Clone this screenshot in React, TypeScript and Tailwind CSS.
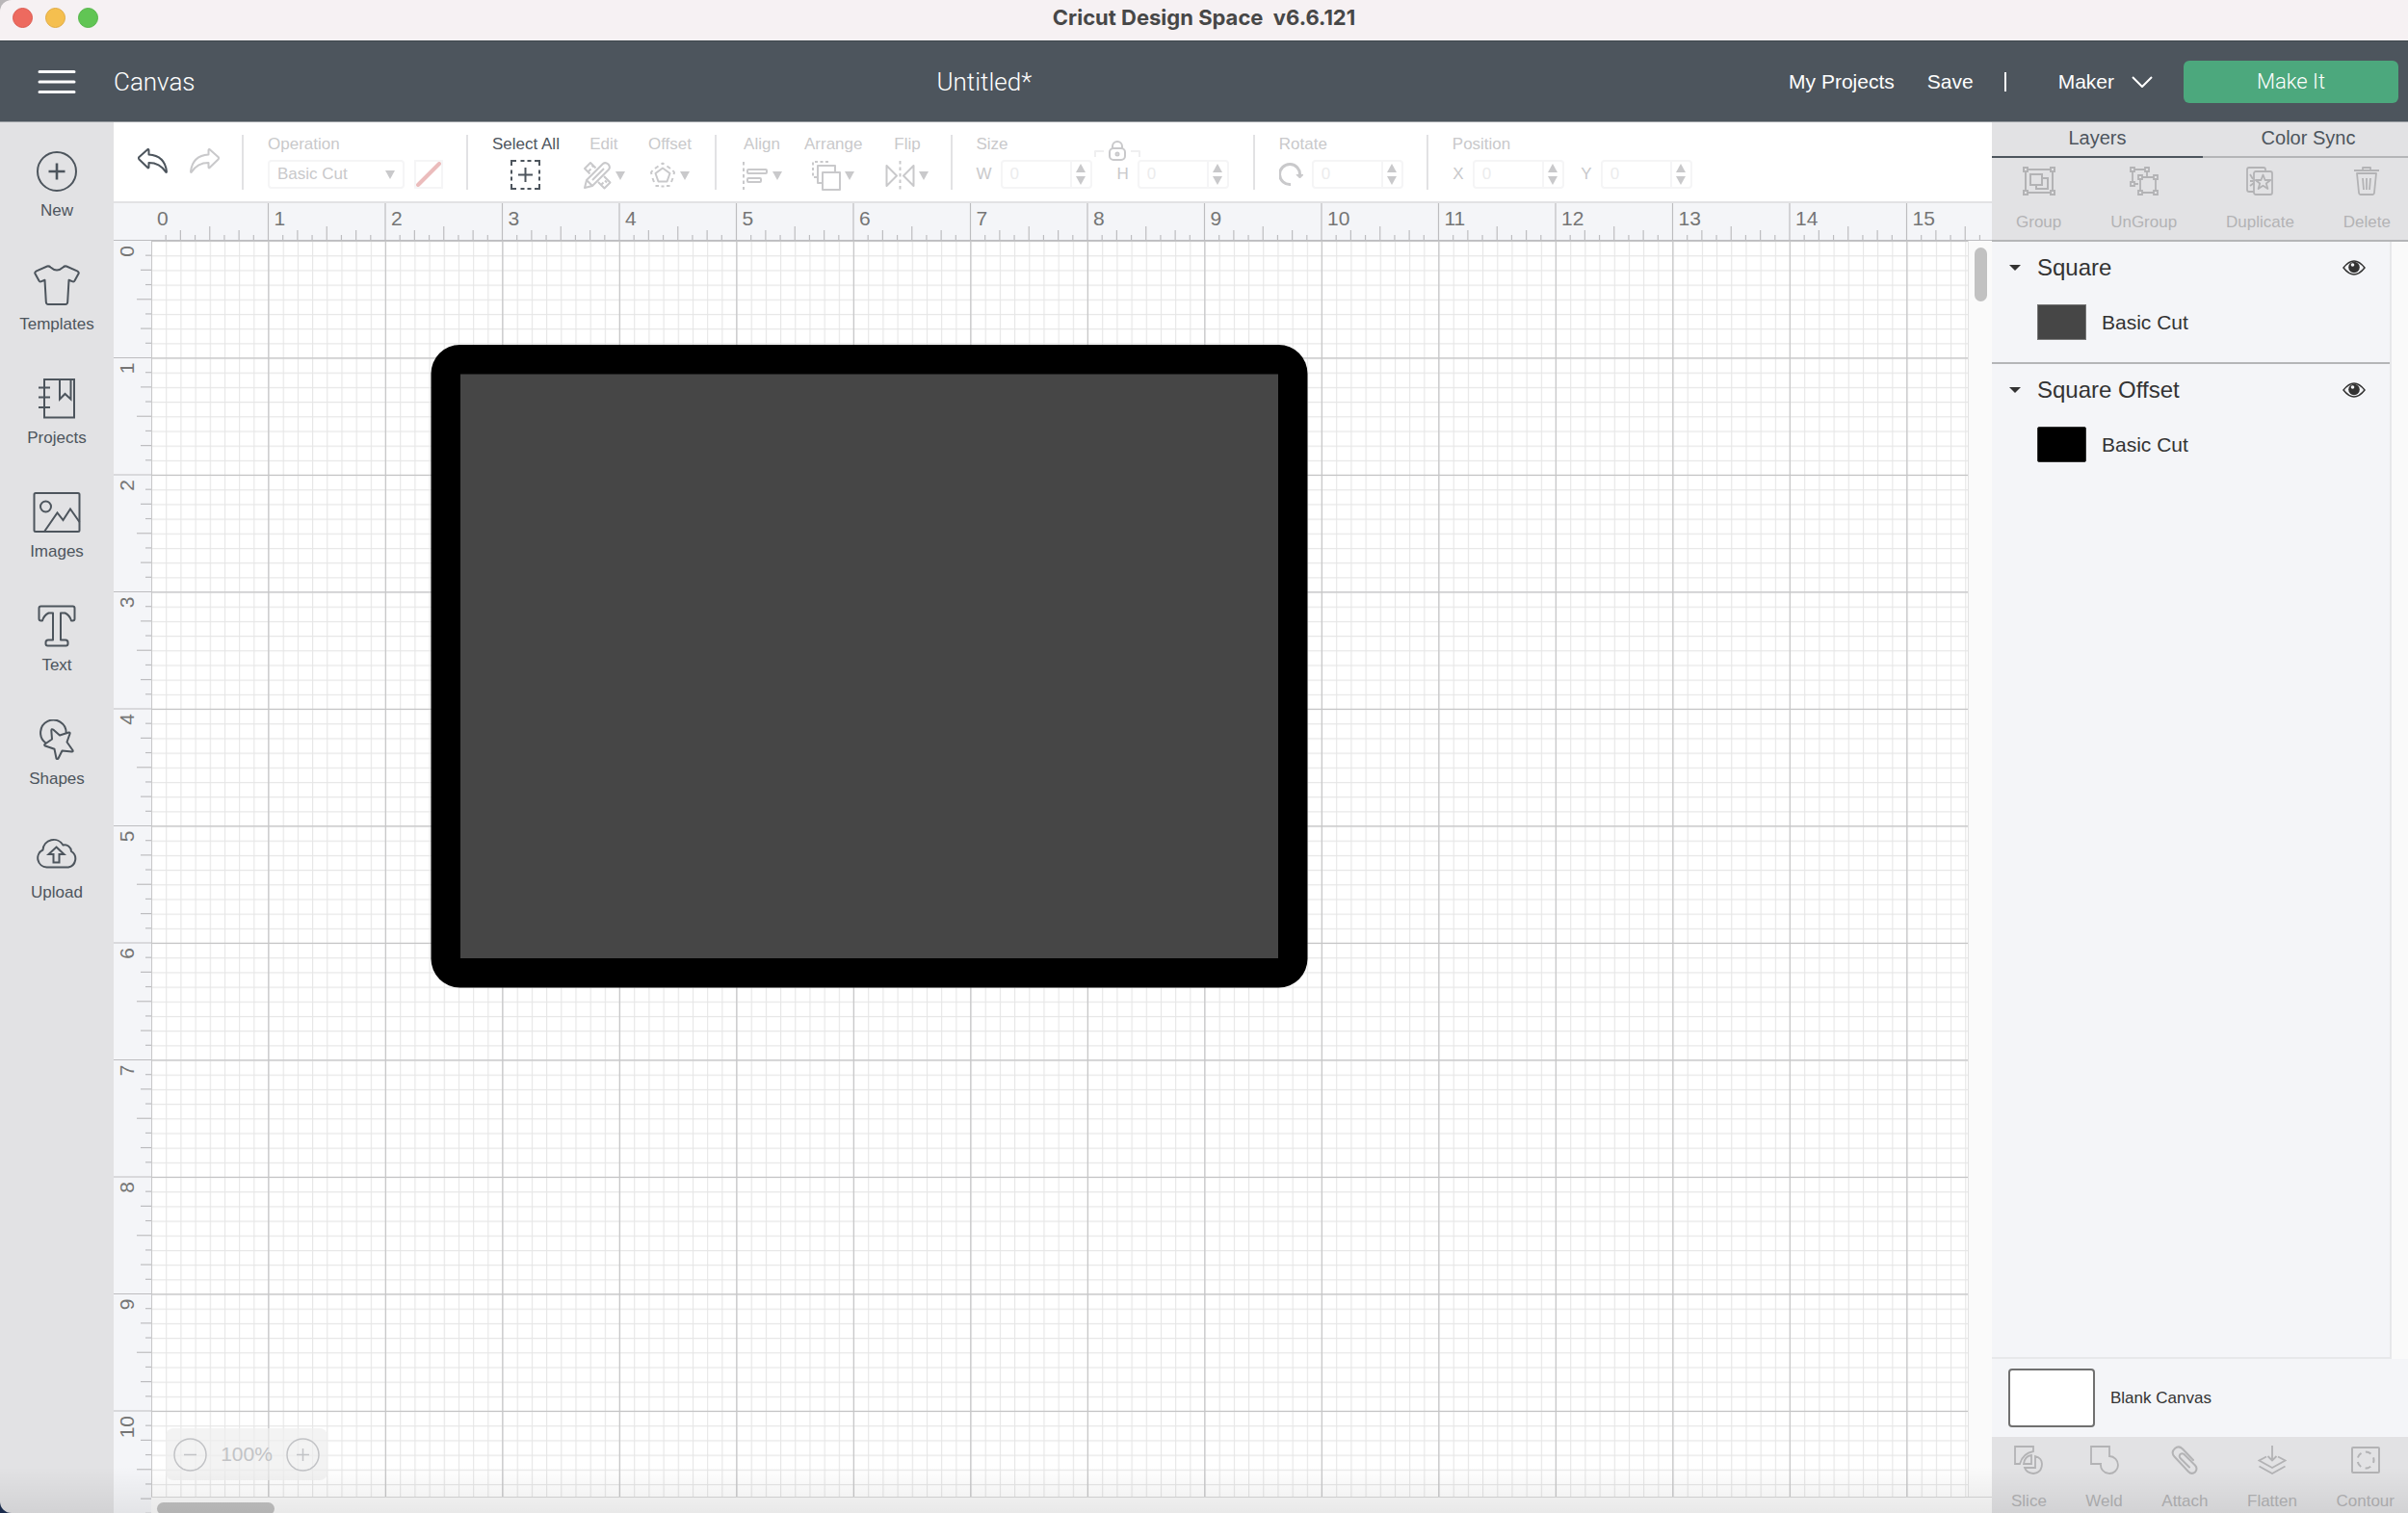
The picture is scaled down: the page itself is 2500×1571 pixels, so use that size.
import React from "react";
import type { ReactNode } from "react";

const INCH = 121.5;
const range = (from: number, to: number) => Array.from({ length: to - from }, (_, i) => from + i);

type IconProps = { w: number; h: number; className?: string; sw?: number; children: ReactNode };

function Icon({ w, h, className = "", sw = 2, children }: IconProps) {
  return (
    <svg
      width={w}
      height={h}
      viewBox={`0 0 ${w} ${h}`}
      fill="none"
      stroke="currentColor"
      strokeWidth={sw}
      strokeLinejoin="round"
      aria-hidden="true"
      className={`shrink-0 ${className}`}
    >
      {children}
    </svg>
  );
}

/* ---------- Title bar and header ---------- */

function TitleBar() {
  return (
    <div className="grid h-[42px] grid-cols-[1fr_auto_1fr] items-center bg-[#f6f1f3] px-[13px] pb-1.5">
      <div className="flex gap-[13px]">
        <button aria-label="Close" className="size-[21px] rounded-full border border-[#dc5a50] bg-[#ed6a5f]" />
        <button aria-label="Minimize" className="size-[21px] rounded-full border border-[#dfaa42] bg-[#f5bf4f]" />
        <button aria-label="Zoom window" className="size-[21px] rounded-full border border-[#54b548] bg-[#61c554]" />
      </div>
      <h1 className="whitespace-pre font-['Inter','Liberation_Sans',sans-serif] text-[22px] font-bold leading-7 text-[#474747]">
        {"Cricut Design Space  v6.6.121"}
      </h1>
    </div>
  );
}

function Header() {
  return (
    <header className="flex h-[85px] shrink-0 items-center border-b border-t border-b-[#9b9fa4] border-t-[#3f474d] bg-[#4d555d] pr-2.5 text-[21px] leading-7 text-white">
      <button aria-label="Menu" className="flex w-[118px] justify-center">
        <Icon w={40} h={26} sw={3}>
          <path d="M2 2.5h36M2 13h36M2 23.5h36" strokeLinecap="round" />
        </Icon>
      </button>
      <span className="font-['Roboto','Liberation_Sans',sans-serif] text-[26px] font-light">Canvas</span>
      <span className="flex-1 pr-4 text-center font-['Roboto','Liberation_Sans',sans-serif] text-[26px] font-light">Untitled*</span>
      <nav className="flex items-center">
        <a href="#projects">My Projects</a>
        <button className="ml-[34px]">Save</button>
        <span className="ml-8 h-5 w-0.5 bg-white" />
        <button className="ml-[54px] flex items-center gap-[18px]">
          Maker
          <Icon w={22} h={12}>
            <path d="M1 1l10 10L21 1" />
          </Icon>
        </button>
        <button className="ml-8 h-11 w-[223px] rounded-md bg-[#4ca87d] font-['Roboto','Liberation_Sans',sans-serif] text-[22px] font-light">
          Make It
        </button>
      </nav>
    </header>
  );
}

/* ---------- Left sidebar ---------- */

const sidebarItems: { label: string; icon: ReactNode }[] = [
  {
    label: "New",
    icon: (
      <Icon w={42} h={42}>
        <circle cx="21" cy="21" r="20" />
        <path d="M21 12.5v17M12.5 21h17" strokeWidth="2.6" />
      </Icon>
    ),
  },
  {
    label: "Templates",
    icon: (
      <Icon w={48} h={42}>
        <path d="M14 1.500Q16 1 17.500 2.500Q24 8.500 30.500 2.500Q32 1 34 1.500L44.500 6.200Q47.300 7.500 46.600 9L42.500 16.500Q42 17.800 40.500 17.400L36.500 15.800L35.200 38.500Q35 41 33 41H15Q13 41 12.800 38.500L11.500 15.800L7.500 17.400Q6 17.800 5.500 16.500L1.400 9Q.7 7.500 3.500 6.200Z" />
      </Icon>
    ),
  },
  {
    label: "Projects",
    icon: (
      <Icon w={38} h={42}>
        <path d="M6 1h31v39.500H6zM0 9.500h12M0 19.500h12M0 30h12M22 1v20.500l5.500-5.500l6 5.500V1" strokeLinejoin="miter" />
      </Icon>
    ),
  },
  {
    label: "Images",
    icon: (
      <Icon w={50} h={42}>
        <rect x="1.500" y="1" width="47" height="40" rx="1.500" />
        <circle cx="13.500" cy="15" r="5.500" />
        <path d="M12 41L25.500 21.500L31.500 29L39 17.500L48.500 31" strokeLinejoin="miter" />
      </Icon>
    ),
  },
  {
    label: "Text",
    icon: (
      <Icon w={40} h={44}>
        <path d="M3.500 1.500H36.500Q38.500 1.500 38.500 3.500V14.500Q38.500 16.500 36.500 16.500H35Q33.500 11 28.500 8.500H24V36.500H29Q31.500 36.500 31.500 39V40.500Q31.500 42.500 29.500 42.500H10.500Q8.500 42.500 8.500 40.500V39Q8.500 36.500 11 36.500H16V8.500H11.500Q6.500 11 5 16.500H3.500Q1.500 16.500 1.500 14.500V3.500Q1.500 1.500 3.500 1.500Z" />
      </Icon>
    ),
  },
  {
    label: "Shapes",
    icon: (
      <Icon w={36} h={42}>
        <path d="M6.500 24.500A13.300 13.300 0 1 1 27.700 14" />
        <path d="M14.200 10.500L21 16.500L30.500 13.500Q32 13.300 31.500 15L28.500 23.500L34.500 32Q35.200 33.700 33.500 33.500L23.500 32.500L19.500 40.500Q18.500 41.700 17.500 40.500L15.500 30.700L6 27.500Q4.500 26.700 5.800 25.500L13 20.500L12.300 11.500Q12.500 9.500 14.200 10.500Z" />
      </Icon>
    ),
  },
  {
    label: "Upload",
    icon: (
      <Icon w={43} h={32}>
        <path d="M10.500 30.500A9.500 9.500 0 0 1 6.500 12.500A11.300 11.300 0 0 1 27.500 7.500A6.800 6.800 0 0 1 36 14A9 9 0 0 1 33 30.500Z" />
        <path d="M20.500 9.500L28.500 17H23.500V25.500H17.500V17H12.500Z" strokeLinejoin="miter" />
      </Icon>
    ),
  },
];

function Sidebar() {
  return (
    <aside className="flex w-[118px] shrink-0 flex-col gap-[45px] bg-[#e2e2e4] pt-[30px] text-[17px] leading-[22px] text-[#4d555d]">
      {sidebarItems.map((item) => (
        <button key={item.label} className="flex flex-col items-center gap-[9px]">
          <span className="flex h-[42px] items-center">{item.icon}</span>
          {item.label}
        </button>
      ))}
    </aside>
  );
}

/* ---------- Toolbar ---------- */

function Caret() {
  return (
    <svg width="10" height="9" viewBox="0 0 10 9" fill="currentColor" aria-hidden="true" className="shrink-0">
      <path d="M0 0h10L5 9z" />
    </svg>
  );
}

function Divider({ className = "" }: { className?: string }) {
  return <span className={`h-[57px] w-0.5 shrink-0 bg-[#e2e2e4] ${className}`} />;
}

function ToolMenu({ label, icon, className = "" }: { label: string; icon: ReactNode; className?: string }) {
  return (
    <button disabled className={`flex h-[60px] shrink-0 flex-col items-center ${className}`}>
      <span className="h-5">{label}</span>
      <span className="mt-1.5 flex h-8 items-center gap-1">
        {icon}
        <Caret />
      </span>
    </button>
  );
}

function NumberField({ name, caption }: { name: string; caption: ReactNode }) {
  return (
    <div className="flex items-center gap-[9px]">
      <label htmlFor={name} className="flex min-w-3 justify-center">
        {caption}
      </label>
      <div className="flex h-[30px] w-[95px] rounded border-2 border-[#f5f5f6] text-[#c9c9cb]">
        <input id={name} aria-label={name} disabled defaultValue="0" className="min-w-0 flex-1 pl-2 text-[#ececed]" />
        <div className="flex w-[21px] flex-col items-center justify-center gap-1 border-l-2 border-[#f5f5f6]">
          <button disabled aria-label={`Increase ${name}`} className="rotate-180">
            <Caret />
          </button>
          <button disabled aria-label={`Decrease ${name}`}>
            <Caret />
          </button>
        </div>
      </div>
    </div>
  );
}

const undoPath = "M1 10.500Q.7 9.800 1.500 9L10.500 1Q11.500.8 11.500 2V6.500Q28 7.500 30 24Q30 25.500 29 24.500Q23 15 11.500 15V19.500Q11.300 21 10.300 20L1.500 11.500Z";

function Toolbar() {
  return (
    <div className="flex h-[84px] shrink-0 items-start overflow-hidden border-b-2 border-[#e2e2e4] bg-white pl-[25px] pt-[13px] text-[17px] leading-5 text-[#c9c9cb]">
      <div className="mt-3.5 flex gap-[21px]">
        <button aria-label="Undo" className="text-[#4d555d]">
          <Icon w={32} h={27}>
            <path d={undoPath} />
          </Icon>
        </button>
        <button aria-label="Redo" disabled>
          <Icon w={32} h={27} className="-scale-x-100">
            <path d={undoPath} />
          </Icon>
        </button>
      </div>

      <Divider className="ml-[23px]" />
      <div className="ml-[25px] flex w-[182px] flex-col">
        <label htmlFor="operation" className="h-5">
          Operation
        </label>
        <div className="mt-1.5 flex items-center gap-2.5">
          <span className="relative flex w-[143px] items-center">
            <select
              id="operation"
              disabled
              className="h-[30px] w-full appearance-none rounded border-2 border-[#f5f5f6] bg-white pl-2 opacity-100"
            >
              <option>Basic Cut</option>
            </select>
            <span className="pointer-events-none absolute right-2.5">
              <Caret />
            </span>
          </span>
          <button disabled aria-label="No color" className="size-[30px] border-2 border-[#f5f5f6]">
            <Icon w={26} h={26} sw={4} className="text-[#ebbcbc]">
              <path d="M2 24L24 2" strokeLinecap="round" />
            </Icon>
          </button>
        </div>
      </div>

      <Divider className="ml-6" />
      <button className="ml-[25px] flex h-[60px] flex-col items-center text-[#4d555d]">
        <span className="h-5">Select All</span>
        <Icon w={31} h={31} className="mt-1.5">
          <path d="M1 6V1h5M25 1h5v5M30 25v5h-5M6 30H1v-5M10.500 1h4M17.500 1h4M10.500 30h4M17.500 30h4M1 10.500v4M1 17.500v4M30 10.500v4M30 17.500v4M15.500 8v15M8 15.500h15" strokeLinejoin="miter" />
        </Icon>
      </button>
      <ToolMenu
        label="Edit"
        className="ml-6"
        icon={
          <Icon w={30} h={30}>
            <path d="M7.500 13.500L2 8L8 2L13.500 7.500M6 11l2.500-2.500M9.500 4.500l2 2M22 16l6.500 6.500l-6 6L16 22M19 25l2.500-2.500M23 20.500l2 2" />
            <path d="M2 28L4 20L21 3Q23.500 1 26.500 3.500Q29 6.500 27 9L10 26ZM4 20L10 26M10 20L22 8" />
          </Icon>
        }
      />
      <ToolMenu
        label="Offset"
        className="ml-6"
        icon={
          <Icon w={28} h={28}>
            <path d="M14 6.500L21.500 12L18.500 20.500H9.500L6.500 12Z" />
            <path d="M12.500 2.500L14 1.500L15.500 2.500M18.500 4.500L22 7M24.500 9L26 11L25.500 13M24.500 17L23 21M21.500 25H18M15.500 25.500H12.500M10 25H6.500M5 21L3.500 17M2.500 13L2 11L3.500 9M6 7L9.500 4.500" />
          </Icon>
        }
      />

      <Divider className="ml-6" />
      <ToolMenu
        label="Align"
        className="ml-[26px]"
        icon={
          <Icon w={28} h={30}>
            <path d="M2 1v29" strokeDasharray="3.500 3" />
            <rect x="6" y="9" width="20" height="4" rx="1" />
            <rect x="6" y="18" width="14" height="4" rx="1" />
          </Icon>
        }
      />
      <ToolMenu
        label="Arrange"
        className="ml-[23px]"
        icon={
          <Icon w={30} h={31}>
            <path d="M17 1H1v16h4" strokeDasharray="3 2.500" />
            <path d="M10 23H6V5h18v6" />
            <rect x="11" y="12" width="18" height="18" />
          </Icon>
        }
      />
      <ToolMenu
        label="Flip"
        className="ml-6"
        icon={
          <Icon w={31} h={31}>
            <path d="M1.500 5v21L12 15.500ZM29.500 5v21L19 15.500Z" />
            <path d="M15.500 0v31" strokeDasharray="3.500 3" />
          </Icon>
        }
      />

      <Divider className="ml-[23px]" />
      <div className="ml-6 flex shrink-0 flex-col">
        <div className="h-5">Size</div>
        <div className="mt-1.5 flex gap-[26px]">
          <NumberField name="Width" caption="W" />
          <div className="relative">
            <NumberField name="Height" caption="H" />
            <button disabled aria-label="Lock proportions" className="absolute -left-6 -top-5">
              <Icon w={48} h={22}>
                <path d="M1 17v-6h9M38 11h9v6" stroke="#efeff0" />
                <rect x="16" y="8" width="16" height="12" rx="4" />
                <path d="M19 8V6a5 5 0 0 1 10 0v2" />
                <circle cx="24" cy="14" r="1.500" />
              </Icon>
            </button>
          </div>
        </div>
      </div>

      <Divider className="ml-[25px]" />
      <div className="ml-[25px] flex shrink-0 flex-col">
        <div className="h-5">Rotate</div>
        <div className="mt-1.5">
          <NumberField
            name="Rotation"
            caption={
              <Icon w={25} h={28} sw={3}>
                <path d="M12 24.500A10.500 10.500 0 1 1 21.500 15" />
                <path d="M18 14.500h7L21.500 18z" fill="currentColor" strokeWidth="1" />
              </Icon>
            }
          />
        </div>
      </div>

      <Divider className="ml-6" />
      <div className="ml-[25px] flex shrink-0 flex-col">
        <div className="h-5">Position</div>
        <div className="mt-1.5 flex gap-[17px]">
          <NumberField name="X position" caption="X" />
          <NumberField name="Y position" caption="Y" />
        </div>
      </div>
    </div>
  );
}

/* ---------- Canvas ---------- */

const tickLength = (i: number) => (i % 4 === 0 ? 15 : i % 2 === 0 ? 11 : 6);

function TopRuler() {
  return (
    <svg className="h-[39px] w-full shrink-0 bg-[#f4f5f8]" aria-hidden="true">
      {range(1, 200).map((i) => {
        const x = 39 + (i * INCH) / 8;
        return <line key={i} x1={x} x2={x} y1={i % 8 === 0 ? 0 : 39 - tickLength(i)} y2="39" stroke="#bdbdc0" strokeWidth="1.200" />;
      })}
      {range(0, 16).map((n) => (
        <text key={n} x={45 + n * INCH} y="23" fontSize="21" fill="#757575">
          {n}
        </text>
      ))}
      <line x1="0" x2="100%" y1="38.500" y2="38.500" stroke="#bdbdc0" />
    </svg>
  );
}

function SideRuler() {
  return (
    <svg className="h-full w-[39px] shrink-0 bg-[#f4f5f8]" aria-hidden="true">
      {range(1, 130).map((i) => {
        const y = (i * INCH) / 8;
        return <line key={i} y1={y} y2={y} x1={i % 8 === 0 ? 0 : 39 - tickLength(i)} x2="39" stroke="#bdbdc0" strokeWidth="1.200" />;
      })}
      {range(0, 11).map((n) => (
        <text key={n} transform={`translate(21 ${n * INCH + 5}) rotate(-90)`} textAnchor="end" fontSize="21" fill="#757575">
          {n}
        </text>
      ))}
    </svg>
  );
}

function Artboard() {
  return (
    <svg className="absolute inset-0 size-full" role="img" aria-label="Design canvas">
      <defs>
        <pattern id="minor" width={INCH / 8} height={INCH / 8} patternUnits="userSpaceOnUse">
          <path d="M0 .5h16M.5 0v16" stroke="#e6e6e6" strokeWidth="1.200" />
        </pattern>
      </defs>
      <rect width="100%" height="100%" fill="url(#minor)" />
      {range(0, 25).map((n) => (
        <g key={n} stroke="#c6c6c7" strokeWidth="1.200">
          <line x1={n * INCH + 0.3} x2={n * INCH + 0.3} y1="0" y2="100%" />
          <line y1={n * INCH + 0.3} y2={n * INCH + 0.3} x1="0" x2="100%" />
        </g>
      ))}
      <rect x="290.500" y="108" width="910" height="667.500" rx="30" fill="#000" />
      <rect x="321" y="138.500" width="849" height="606.500" fill="#464646" />
    </svg>
  );
}

function ZoomControl() {
  return (
    <div className="absolute bottom-[17px] left-[15px] flex h-[54px] w-[168px] items-center justify-between rounded-lg bg-[#eeeeee]/70 px-2 text-[21px] text-[#c2c3c6]">
      <button aria-label="Zoom out">
        <Icon w={35} h={35} sw={1.5}>
          <circle cx="17.500" cy="17.500" r="16.500" />
          <path d="M11 17.500h13" />
        </Icon>
      </button>
      100%
      <button aria-label="Zoom in">
        <Icon w={35} h={35} sw={1.5}>
          <circle cx="17.500" cy="17.500" r="16.500" />
          <path d="M11 17.500h13M17.500 11v13" />
        </Icon>
      </button>
    </div>
  );
}

function Workspace() {
  return (
    <main className="flex min-w-0 flex-1 flex-col">
      <Toolbar />
      <TopRuler />
      <div className="flex min-h-0 flex-1">
        <SideRuler />
        <div className="flex min-w-0 flex-1 flex-col">
          <div className="flex min-h-0 flex-1">
            <div className="relative min-w-0 flex-1 overflow-hidden bg-white">
              <Artboard />
              <ZoomControl />
            </div>
            <div className="flex w-[25px] justify-center border-l border-[#e3e3e3] bg-[#fafafa] pt-[7px]">
              <span className="h-14 w-[13px] rounded-full bg-[#c1c1c1]" />
            </div>
          </div>
          <div className="h-[17px] overflow-hidden border-t border-[#d9d9d9] bg-[#fafafa] pl-1.5 pt-[5px]">
            <div className="h-[13px] w-[122px] rounded-full bg-[#c1c1c1]" />
          </div>
        </div>
      </div>
    </main>
  );
}

/* ---------- Layers panel ---------- */

function PanelTool({ label, icon }: { label: string; icon: ReactNode }) {
  return (
    <button disabled className="flex flex-col items-center gap-[17px]">
      <span className="flex h-[30px] items-center">{icon}</span>
      {label}
    </button>
  );
}

function PanelTabs() {
  return (
    <div role="tablist" className="grid grid-cols-[219fr_213fr] bg-[#e2e2e4] text-xl leading-6 text-[#4d555d]">
      <button role="tab" aria-selected="true" className="h-[37px] border-b-2 border-[#4d555d] pb-1">
        Layers
      </button>
      <button role="tab" aria-selected="false" className="h-[37px] border-b-2 border-[#b4b5b7] pb-1 pl-1.5">
        Color Sync
      </button>
    </div>
  );
}

function PanelTools() {
  return (
    <div className="flex h-[87px] shrink-0 items-start justify-between border-b-2 border-[#b4b5b7] bg-[#e2e2e4] pl-[25px] pr-[18px] pt-[9px] text-[17px] leading-[22px] text-[#b3b3b5]">
      <PanelTool
        label="Group"
        icon={
          <Icon w={34} h={30}>
            <path d="M5 3h24M5 27h24M3 5v20M31 5v20" />
            <path d="M1 1h4v4H1zM29 1h4v4h-4zM1 25h4v4H1zM29 25h4v4h-4zM8 8h12v11H8zM20 12h6v11H14v-4" strokeLinejoin="miter" />
          </Icon>
        }
      />
      <PanelTool
        label="UnGroup"
        icon={
          <Icon w={30} h={30} sw={1.8}>
            <path d="M5 3h11M3 5v11M18 5v5M5 18h4M13 11h12M13 27h12M11 13v12M27 13v12" />
            <path d="M1 1h4v4H1zM16 1h4v4h-4zM1 16h4v4H1zM9 9h4v4H9zM25 9h4v4h-4zM9 25h4v4H9zM25 25h4v4h-4z" strokeLinejoin="miter" />
          </Icon>
        }
      />
      <PanelTool
        label="Duplicate"
        icon={
          <Icon w={28} h={30} sw={1.8}>
            <path d="M8 26H3q-2 0-2-2V3q0-2 2-2h15q2 0 2 2v2" />
            <rect x="8" y="5" width="19" height="24" rx="2" />
            <path d="M17.500 8.500l2.100 5.500h5.600l-4.400 3.500l1.600 5.500l-4.900-3.200L12.600 23l1.600-5.500L9.800 14h5.600zM4 8l3 5M4 20l4-3M4 15h3" />
          </Icon>
        }
      />
      <PanelTool
        label="Delete"
        icon={
          <Icon w={26} h={30} sw={1.8}>
            <path d="M0 4h26M9 4V1h8v3M3 7h20l-2 20q-.2 2-2 2H7q-1.800 0-2-2zM9 12l1 12M13 12v12M17 12l-1 12" />
          </Icon>
        }
      />
    </div>
  );
}

function EyeIcon() {
  return (
    <svg width="24" height="16" viewBox="0 0 24 16" aria-hidden="true">
      <path d="M1 8Q12-6 23 8Q12 22 1 8Z" fill="none" stroke="#333" strokeWidth="1.500" />
      <circle cx="12" cy="7.500" r="5.800" fill="#333" />
      <circle cx="10.500" cy="5" r="1.800" fill="#f4f5f8" />
    </svg>
  );
}

function Layer({ name, swatch, last }: { name: string; swatch: string; last?: boolean }) {
  return (
    <li className={`h-[127px] pl-[18px] pr-[25px] pt-[13px] text-[#333] ${last ? "" : "border-b-2 border-[#b4b5b7]"}`}>
      <div className="flex h-7 items-center">
        <button aria-label={`Collapse ${name}`} className="w-[29px]">
          <svg width="12" height="6" viewBox="0 0 12 6" fill="#333" aria-hidden="true">
            <path d="M0 0h12L6 6z" />
          </svg>
        </button>
        <span className="flex-1 text-2xl">{name}</span>
        <button aria-label={`Toggle visibility of ${name}`}>
          <EyeIcon />
        </button>
      </div>
      <div className="mt-6 flex items-center gap-4 pl-[29px] text-[21px]">
        <span className={`h-[37px] w-[51px] border ${swatch}`} />
        Basic Cut
      </div>
    </li>
  );
}

function LayersPanel() {
  return (
    <aside className="flex w-[432px] shrink-0 flex-col">
      <PanelTabs />
      <PanelTools />
      <div className="flex min-h-0 flex-1 bg-[#fafafa]">
        <ul className="flex-1 border-b-2 border-r-2 border-[#e7e8ea] bg-[#f4f5f8]">
          <Layer name="Square" swatch="border-[#777] bg-[#464646]" />
          <Layer name="Square Offset" swatch="border-[#333] bg-black rounded-xs" last />
        </ul>
        <span className="w-[17px]" />
      </div>
      <div className="flex h-[81px] shrink-0 items-center gap-4 bg-[#f4f5f8] pl-[17px] text-[17px] text-[#333]">
        <button aria-label="Canvas color" className="h-[61px] w-[90px] rounded border-2 border-[#707070] bg-white" />
        Blank Canvas
      </div>
      <div className="flex h-[79px] shrink-0 items-start justify-between bg-[#e2e2e4] pl-5 pr-3.5 pt-[9px] text-[17px] leading-[22px] text-[#b3b3b5]">
        <PanelTool
          label="Slice"
          icon={
            <Icon w={30} h={30} sw={1.8}>
              <path d="M6 19H1V1h19v5Q9 8 6 19ZM10 19Q11 11 18 10v9ZM22 11q7 2 7 8q0 9-9 10q-7-.5-9-6h11z" strokeLinejoin="miter" />
            </Icon>
          }
        />
        <PanelTool
          label="Weld"
          icon={
            <Icon w={30} h={30} sw={1.8}>
              <path d="M11 19H1V1h19v10A9 9 0 1 1 11 19Z" strokeLinejoin="miter" />
            </Icon>
          }
        />
        <PanelTool
          label="Attach"
          icon={
            <Icon w={28} h={30}>
              <path d="M23 15L12 3.500Q8-.5 4 3Q-.5 7 3.500 11.500L18 27Q21.500 30.500 25 27.500Q28 24 25 20.500L13.500 9Q11.500 7.500 9.500 9Q8 11 9.500 13L19 22.500" strokeLinecap="round" />
            </Icon>
          }
        />
        <PanelTool
          label="Flatten"
          icon={
            <Icon w={30} h={30} sw={1.8}>
              <path d="M15 0v15M10.500 11l4.500 4.500l4.500-4.500M9 11.500L1.500 15.500L15 23L28.500 15.500L21 11.500M1.500 21.500L15 29L28.500 21.500" strokeLinejoin="miter" />
            </Icon>
          }
        />
        <PanelTool
          label="Contour"
          icon={
            <Icon w={30} h={28}>
              <rect x="1" y="1" width="28" height="26" rx="1" />
              <circle cx="15" cy="14" r="8.500" strokeDasharray="6 4.680" strokeDashoffset="3" />
            </Icon>
          }
        />
      </div>
    </aside>
  );
}

export default function App() {
  return (
    <div className="h-screen bg-linear-to-b from-[#b9b6b8] to-[#1b2c4d] font-['Liberation_Sans',Arial,sans-serif]">
      <div className="relative flex h-full flex-col overflow-hidden rounded-l-xl">
        <TitleBar />
        <Header />
        <div className="flex min-h-0 flex-1">
          <Sidebar />
          <Workspace />
          <LayersPanel />
        </div>
        <div className="pointer-events-none absolute inset-x-0 bottom-0 h-12 bg-linear-to-b from-black/0 to-black/7" />
      </div>
    </div>
  );
}
